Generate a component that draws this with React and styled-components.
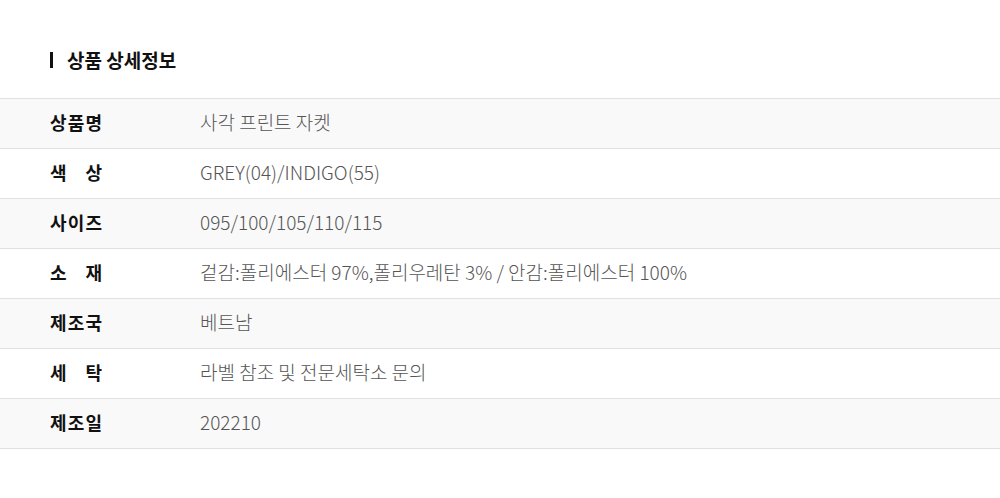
import React from "react";
import styled, { createGlobalStyle } from "styled-components";

const Global = createGlobalStyle`
  html, body { margin: 0; padding: 0; background: #fff; }
  body { font-family: "Noto Sans CJK KR", "Noto Sans", sans-serif; }
`;

const Page = styled.div`
  width: 1000px;
  padding-top: 48px;
`;

const Title = styled.h2`
  margin: 0 0 0 50px;
  display: flex;
  align-items: center;
  gap: 14px;
  font-size: 19px;
  font-weight: 700;
  color: #111;
  line-height: 24px;
  &::before {
    content: "";
    width: 3px;
    height: 16px;
    background: #111;
  }
`;

const Table = styled.div`
  margin-top: 26px;
  border-top: 1px solid #e0e0e0;
`;

const Row = styled.div`
  display: flex;
  align-items: center;
  height: 49px;
  padding-bottom: 0;
  border-bottom: 1px solid #e0e0e0;
  background: ${(p) => (p.$shade ? "#f9f9f9" : "#fff")};
`;

const Cell = styled.div`
  line-height: 24px;
  margin-top: -4px;
`;

const Label = styled(Cell)`
  width: 52px;
  margin-left: 50px;
  margin-right: 98px;
  display: flex;
  justify-content: space-between;
  font-size: 18px;
  font-weight: 700;
  color: #111;
`;

const Value = styled(Cell)`
  font-size: 19px;
  font-weight: 300;
  color: #555;
`;

const rows = [
  ["상품명", "사각 프린트 자켓"],
  ["색상", "GREY(04)/INDIGO(55)"],
  ["사이즈", "095/100/105/110/115"],
  ["소재", "겉감:폴리에스터 97%,폴리우레탄 3% / 안감:폴리에스터 100%"],
  ["제조국", "베트남"],
  ["세탁", "라벨 참조 및 전문세탁소 문의"],
  ["제조일", "202210"],
];

export default function App() {
  return (
    <Page>
      <Global />
      <Title>상품 상세정보</Title>
      <Table>
        {rows.map(([k, v], i) => (
          <Row key={k} $shade={i % 2 === 0}>
            <Label>
              {k.split("").map((c, j) => (
                <span key={j}>{c}</span>
              ))}
            </Label>
            <Value>{v}</Value>
          </Row>
        ))}
      </Table>
    </Page>
  );
}
